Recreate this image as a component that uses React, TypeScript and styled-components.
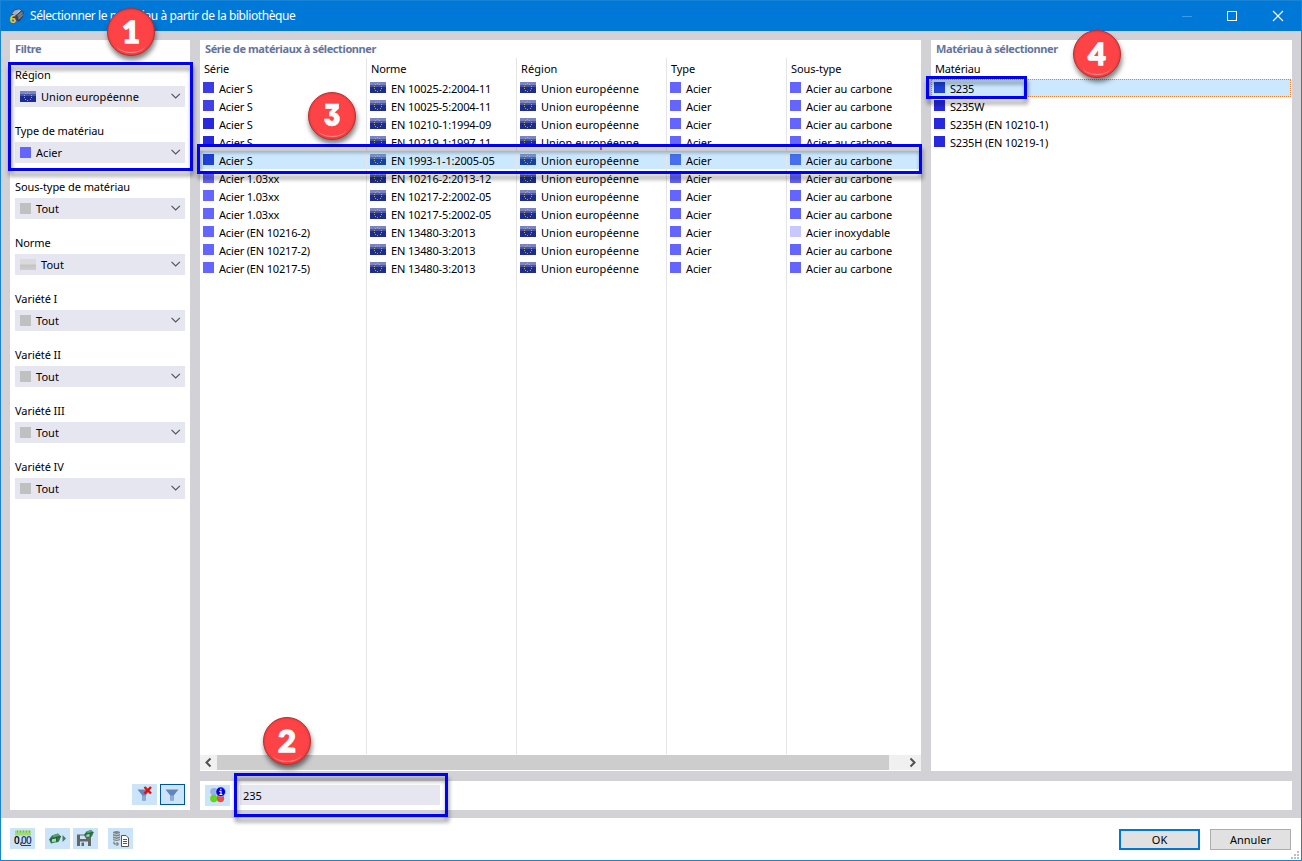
import React from 'react';
import styled, { createGlobalStyle, css } from 'styled-components';

const Global = createGlobalStyle`
  * { box-sizing: border-box; }
  html, body { margin: 0; padding: 0; background: #fff; }
  body { font: 11px/18px "Noto Sans", "Open Sans", sans-serif; color: #000; overflow: hidden; }
  svg { display: block; flex: none; overflow: visible; }
`;

const Win = styled.div`
  position: relative;
  width: 1302px; height: 861px;
  display: flex; flex-direction: column;
  border: 1px solid #1883d7;
  background: #fff;
`;
const TitleBar = styled.header`
  height: 30px; flex: none; display: flex; align-items: center;
  background: #0078d7; color: #fff; padding-left: 8px;
`;
const Title = styled.span`
  margin-left: 5px; flex: 1; font-size: 12px; letter-spacing: -0.41px;
`;
const Controls = styled.div`
  display: flex; width: 138px; height: 100%;
`;
const Control = styled.div`
  width: 46px; display: flex; align-items: center; justify-content: center; padding-bottom: 1px;
`;
const Body = styled.main`
  height: 787px; flex: none; display: grid; gap: 10px;
  grid-template-columns: 180px 721px 361px;
  grid-template-rows: 731px 29px;
  padding: 9px 9px 8px; background: #d2d1d6;
`;
const Panel = styled.section`
  background: #fff; min-width: 0; display: flex; flex-direction: column;
`;
const FilterPanel = styled(Panel)`grid-row: span 2;`;
const SearchPanel = styled.div`
  grid-column: 2 / 4; background: #fff; display: flex; align-items: flex-start; gap: 10px; padding: 4px 5px;
`;
const PanelTitle = styled.h2`
  margin: 0; height: 18px; flex: none; padding-left: 5px; font-size: 11px; line-height: 18px; font-weight: 700;
  letter-spacing: -0.4px; color: #64749c;
`;
const Field = styled.div`
  height: 56px; padding: 8px 5px 0;
`;
const Label = styled.div`height: 20px; line-height: 17px; letter-spacing: -0.07px;`;
const Select = styled.div`
  height: 21px; display: flex; align-items: center; padding: 0 4px 0 5px; gap: 5px; background: #e6e6f1; line-height: 20px;
  & > svg:last-child { position: relative; top: -1px; }
`;
const SelectText = styled.span`flex: 1; letter-spacing: 0.06px;`;
const FilterActions = styled.div`
  margin-top: auto; display: flex; justify-content: flex-end; gap: 3px; padding: 0 5px 5px;
`;
const ToolButton = styled.div<{ $active?: boolean }>`
  width: 25px; height: 21px; display: flex; align-items: center; justify-content: center; background: #cce4f7;
  ${p => p.$active && css`border: 1px solid #005499;`}
`;
const Table = styled.div`flex: 1; display: flex; padding-bottom: 1px;`;
const Column = styled.div<{ $w?: number; $line?: boolean; $tight?: number }>`
  letter-spacing: ${p => p.$tight ?? 0}px;
  ${p => (p.$w ? css`width: ${p.$w}px; flex: none;` : css`flex: 1;`)}
  ${p => p.$line && css`border-right: 1px solid #e5e5e5;`}
`;
const ColHead = styled.div`height: 21px; line-height: 22px; padding-left: 4px;`;
const Cell = styled.div<{ $sel?: boolean; $focus?: boolean }>`
  height: 18px; display: flex; gap: 5px; padding: 3px 0 0 3px; line-height: 14px; white-space: nowrap;
  ${p => p.$sel && css`background: #cce8ff;`}
  ${p => p.$focus && css`outline: 1px dotted #f08030; outline-offset: -1px; margin-right: 1px;`}
`;
const Swatch = styled.i<{ $c: string }>`
  width: 11px; height: 11px; flex: none; background: ${p => p.$c};
`;
const GreyFlag = styled.i`
  width: 16px; height: 11px; flex: none; background: linear-gradient(#dadada 0 45%, #c4c4c4 55%, #cecece);
`;
const ScrollBar = styled.div`
  height: 16px; flex: none; display: flex; background: #f0f0f0; border-bottom: 1px solid #fff;
`;
const ScrollArrow = styled.div`width: 17px; height: 15px; display: flex; align-items: center; justify-content: center;`;
const Thumb = styled.div`width: 672px; height: 15px; background: #cdcdcd; margin-right: 15px;`;
const Input = styled.div`
  width: 200px; height: 20px; background: #e6e6f1; padding-left: 3px; line-height: 21px; letter-spacing: -0.1px;
`;
const Footer = styled.footer`
  flex: 1; display: flex; align-items: flex-start; padding: 10px 10px 0 9px;
`;
const Tools = styled.div`
  display: flex; flex: 1;
  & > :nth-child(2), & > :nth-child(4) { margin-left: 10px; }
  & > :nth-child(3) { margin-left: 3px; }
`;
const Button = styled.div<{ $primary?: boolean }>`
  width: 81px; height: 21px; margin-top: 1px; margin-left: 10px; background: #e1e1e1; display: flex; align-items: center; justify-content: center;
  border: ${p => (p.$primary ? '2px solid #0078d7' : '1px solid #adadad')};
`;
const Grip = styled.svg`position: absolute; right: 2px; bottom: 1px;`;
const Frame = styled.div<{ $x: number; $y: number; $w: number; $h: number }>`
  position: absolute; left: ${p => p.$x - 1}px; top: ${p => p.$y - 1}px; width: ${p => p.$w}px; height: ${p => p.$h}px;
  border: 3px solid #00f; filter: drop-shadow(1px 5px 2px rgba(0, 0, 0, 0.42));
`;
const Badge = styled.div<{ $x: number; $y: number; $flat?: boolean }>`
  position: absolute; left: ${p => p.$x - 25}px; top: ${p => p.$y - 25}px; width: 48px; height: 48px; border-radius: 50%;
  background: #fd4346; border: 1px solid #b5322f; box-shadow: 1px 4px 5px rgba(0, 0, 0, 0.5), inset 0 0 2px #c33;
  color: #fafafa; font: 900 31px/44px Lato, sans-serif; text-align: center; -webkit-text-stroke: 1.4px #fafafa;
  ${p => p.$flat && css`font-family: Inter, sans-serif; font-size: 30px; font-feature-settings: "cv09" 1; -webkit-text-stroke: 0.5px #fafafa;`}
  &::after {
    content: ''; position: absolute; left: 9px; right: 9px; bottom: 2px; height: 14px;
    border-bottom: 1.5px solid #ff8c8c; border-radius: 50%;
  }
`;
const Digit = styled.span<{ $flat?: boolean }>`
  display: inline-block; ${p => p.$flat && css`transform: scaleX(0.84);`}
`;

const Flag = ({ sel }: { sel?: boolean }) => (
  <svg width="16" height="11" shapeRendering="crispEdges">
    <rect width="16" height="11" fill={sel ? '#1642a8' : '#1c2c92'} />
    <rect width="16" height="3" fill="#fff" opacity=".42" />
    <rect y="3" width="16" height="2" fill="#fff" opacity=".2" />
    <path
      d="M7 1h1v1h-1zM9 2h1v1h-1zM5 2h1v1h-1zM4 4h1v1h-1zM11 4h1v1h-1zM4 6h1v1h-1zM11 6h1v1h-1zM5 8h1v1h-1zM7 9h1v1h-1zM10 8h1v1h-1z"
      fill="#c2b66c" opacity=".85"
    />
  </svg>
);
const Chevron = () => (
  <svg width="11" height="8" viewBox="0 0 11 8" fill="none" stroke="#50505a" strokeWidth="1.1"><path d="M1.500 1.800L5.700 6L9.900 1.800" /></svg>
);
const Funnel = ({ off }: { off?: boolean }) => (
  <svg width="20" height="17" viewBox="0 0 20 17">
    <path d="M2.500 3.500H15.500L10.700 9.500V14.500H7.300V9.500Z" fill="#6485bb" /><path d="M7.300 9.500H10.700V14.500H7.300Z" fill="#8eaadb" />
    {off && <path d="M9.500 1L16 7.500M16 1L9.500 7.500" stroke="#e00d0d" strokeWidth="2.400" />}
  </svg>
);
const InfoIcon = () => (
  <svg width="18" height="17" viewBox="0 0 18 17">
    <circle cx="5" cy="4.800" r="3.800" fill="#9aaee6" /><circle cx="4.800" cy="11.500" r="3.700" fill="#61d61c" /><circle cx="11.500" cy="11.500" r="3.700" fill="#e94f4f" />
    <circle cx="11.700" cy="4.800" r="4.800" fill="#0000e0" stroke="#cce4f7" strokeWidth=".5" />
    <path d="M11 2.200h1.600M10.400 4.400H12V7.500M10.400 7.500h3" stroke="#fff" strokeWidth="1.100" fill="none" />
  </svg>
);
const UnitsIcon = () => (
  <svg width="18" height="18" viewBox="0 0 18 18">
    <rect x="1" y=".5" width="16" height="5" fill="#9ddc77" />
    <path d="M3.500 .5v2M6.500 .5v2M9.500 .5v2M12.500 .5v2M15.500 .5v2" stroke="#6fb850" />
    <text x="0" y="14" fontSize="10" fontWeight="600" fontFamily="Open Sans">0,</text>
    <text x="7" y="14" fontSize="10" fontWeight="600" fontFamily="Open Sans" fill="#1c3478" letterSpacing="-.6">00</text>
    <path d="M7 15.500H17" stroke="#2438a0" />
  </svg>
);
const Gem = () => (
  <g>
    <path d="M0 6L3 2L9 0L12 3L10 8L2 10Z" fill="#2f7d4c" /><path d="M3 2L9 0L11 2L5 4Z" fill="#5f9f78" />
    <path d="M3 5.500L7 5V8L3 8.500Z" fill="#a9dcb6" /><path d="M7.500 4L8 9M1 6L7 4L12 3" stroke="#23533a" strokeWidth=".8" fill="none" />
  </g>
);
const ImportIcon = () => (
  <svg width="21" height="16" viewBox="0 0 21 16"><g transform="translate(2 2.500)"><Gem /></g><path d="M15.500 4V11L19 7.500Z" fill="#56706a" /></svg>
);
const SaveIcon = () => (
  <svg width="21" height="18" viewBox="0 0 21 18">
    <path d="M2 4.500H14L16 6.500V16H2Z" fill="#666" /><path d="M5 5.500H11V9H5Z M5 11.500H13V16H5Z" fill="#cce4f7" /><path d="M6.500 12.500H9V16H6.500Z" fill="#666" />
    <g transform="translate(9 0) scale(.8)"><Gem /></g>
  </svg>
);
const CopyIcon = () => (
  <svg width="18" height="18" viewBox="0 0 18 18" fill="none">
    <path d="M1 2Q4.500 0 8 2V10Q4.500 12 1 10Z" fill="#858585" /><path d="M1 3.500Q4.500 5.500 8 3.500M1 6Q4.500 8 8 6M1 8.500Q4.500 10.500 8 8.500" stroke="#cce4f7" strokeWidth=".8" />
    <path d="M2 11.500V14H6M4.500 12L6.500 14L4.500 16" stroke="#666" /><path d="M9.500 5.500H14L16.500 8V16.500H9.500Z" fill="#fff" stroke="#555" /><path d="M11 9.500H15M11 11.500H15M11 13.500H15" stroke="#555" />
  </svg>
);
const AppIcon = () => (
  <svg width="16" height="16" viewBox="0 0 16 16">
    <path d="M2.500 6L5 2L10 .5L15 4L14.500 8L10 14L5 11Z" fill="#3c4350" />
    <path d="M3 5.500L5.500 2.500L10 1.200L12 2.600L6 7.500Z" fill="#9fb0c6" />
    <path d="M8.500 7L13 3.500L14 5L9.500 10Z" fill="#76808c" /><path d="M7.500 6L11.500 2.500M9.500 11L14 6.500" stroke="#dbe4ee" strokeWidth=".7" />
    <text x=".5" y="14.500" fontSize="11" fontWeight="700" fontFamily="Open Sans" fill="#f5c32c">6</text>
  </svg>
);

const FILTERS = ['Sous-type de matériau', 'Norme', 'Variété I', 'Variété II', 'Variété III', 'Variété IV'];
const B = '#6464ff';
const ROWS: [string, string, string][] = [
  ['#3c3ce6', 'Acier S', 'EN 10025-2:2004-11'],
  ['#4141e6', 'Acier S', 'EN 10025-5:2004-11'],
  ['#2828dc', 'Acier S', 'EN 10210-1:1994-09'],
  ['#2828dc', 'Acier S', 'EN 10219-1:1997-11'],
  ['#1e41d8', 'Acier S', 'EN 1993-1-1:2005-05'],
  [B, 'Acier 1.03xx', 'EN 10216-2:2013-12'],
  [B, 'Acier 1.03xx', 'EN 10217-2:2002-05'],
  [B, 'Acier 1.03xx', 'EN 10217-5:2002-05'],
  [B, 'Acier (EN 10216-2)', 'EN 13480-3:2013'],
  [B, 'Acier (EN 10217-2)', 'EN 13480-3:2013'],
  [B, 'Acier (EN 10217-5)', 'EN 13480-3:2013'],
];
const SEL = 4;
const MATERIALS = ['S235', 'S235W', 'S235H (EN 10210-1)', 'S235H (EN 10219-1)'];

export default function App() {
  const blue = (i: number) => (i === SEL ? '#466ef0' : B);
  return (
    <Win>
      <Global />
      <TitleBar>
        <AppIcon />
        <Title>Sélectionner le matériau à partir de la bibliothèque</Title>
        <Controls>
          <Control><svg width="10" height="10"><path d="M1 5.500H11" stroke="#3f9be6" /></svg></Control>
          <Control><svg width="10" height="10"><rect x=".5" y=".5" width="9" height="9" fill="none" stroke="#fff" /></svg></Control>
          <Control><svg width="10" height="10"><path d="M0 0L10 10M10 0L0 10" stroke="#fff" strokeWidth="1.1" /></svg></Control>
        </Controls>
      </TitleBar>
      <Body>
        <FilterPanel>
          <PanelTitle>Filtre</PanelTitle>
          <Field><Label>Région</Label><Select><Flag /><SelectText>Union européenne</SelectText><Chevron /></Select></Field>
          <Field><Label>Type de matériau</Label><Select><Swatch $c={B} /><SelectText>Acier</SelectText><Chevron /></Select></Field>
          {FILTERS.map(t => (
            <Field key={t}><Label>{t}</Label><Select>{t === 'Norme' ? <GreyFlag /> : <Swatch $c="#c0c0c0" />}<SelectText>Tout</SelectText><Chevron /></Select></Field>
          ))}
          <FilterActions>
            <ToolButton><Funnel off /></ToolButton>
            <ToolButton $active><Funnel /></ToolButton>
          </FilterActions>
        </FilterPanel>
        <Panel>
          <PanelTitle>Série de matériaux à sélectionner</PanelTitle>
          <Table>
            <Column $w={167} $line $tight={-0.17}><ColHead>Série</ColHead>{ROWS.map((r, i) => <Cell key={i} $sel={i === SEL}><Swatch $c={r[0]} />{r[1]}</Cell>)}</Column>
            <Column $w={150} $line $tight={-0.15}><ColHead>Norme</ColHead>{ROWS.map((r, i) => <Cell key={i} $sel={i === SEL}><Flag sel={i === SEL} />{r[2]}</Cell>)}</Column>
            <Column $w={150} $line $tight={0.06}><ColHead>Région</ColHead>{ROWS.map((_, i) => <Cell key={i} $sel={i === SEL}><Flag sel={i === SEL} />Union européenne</Cell>)}</Column>
            <Column $w={120} $line $tight={-0.1}><ColHead>Type</ColHead>{ROWS.map((_, i) => <Cell key={i} $sel={i === SEL}><Swatch $c={blue(i)} />Acier</Cell>)}</Column>
            <Column $tight={-0.05}><ColHead>Sous-type</ColHead>{ROWS.map((_, i) => <Cell key={i} $sel={i === SEL}><Swatch $c={i === 8 ? '#c8c8ff' : blue(i)} />{i === 8 ? 'Acier inoxydable' : 'Acier au carbone'}</Cell>)}</Column>
          </Table>
          <ScrollBar>
            <ScrollArrow><svg width="7" height="9" fill="none" stroke="#505050" strokeWidth="2"><path d="M5.500 .5L1.500 4.500L5.500 8.500" /></svg></ScrollArrow>
            <Thumb />
            <ScrollArrow><svg width="7" height="9" fill="none" stroke="#505050" strokeWidth="2"><path d="M1.500 .5L5.500 4.500L1.500 8.500" /></svg></ScrollArrow>
          </ScrollBar>
        </Panel>
        <Panel>
          <PanelTitle>Matériau à sélectionner</PanelTitle>
          <Table>
            <Column $tight={-0.17}><ColHead>Matériau</ColHead>{MATERIALS.map((m, i) => <Cell key={m} $sel={i === 0} $focus={i === 0}><Swatch $c={i ? '#2828dc' : '#1e41d8'} />{m}</Cell>)}</Column>
          </Table>
        </Panel>
        <SearchPanel>
          <ToolButton><InfoIcon /></ToolButton>
          <Input>235</Input>
        </SearchPanel>
      </Body>
      <Footer>
        <Tools>
          <ToolButton><UnitsIcon /></ToolButton><ToolButton><ImportIcon /></ToolButton><ToolButton><SaveIcon /></ToolButton><ToolButton><CopyIcon /></ToolButton>
        </Tools>
        <Button $primary>OK</Button>
        <Button>Annuler</Button>
      </Footer>
      <Grip width="8" height="8" fill="#bfbfbf"><path d="M6 0h2v2h-2zM3 3h2v2h-2zM6 3h2v2h-2zM0 6h2v2h-2zM3 6h2v2h-2zM6 6h2v2h-2z" /></Grip>
      <Frame $x={8} $y={62} $w={185} $h={109} />
      <Frame $x={197} $y={144} $w={725} $h={30} />
      <Frame $x={926} $y={76} $w={101} $h={23} />
      <Frame $x={234} $y={773} $w={214} $h={44} />
      <Badge $x={131} $y={32}><Digit>1</Digit></Badge>
      <Badge $x={287} $y={741}><Digit>2</Digit></Badge>
      <Badge $x={332} $y={116} $flat><Digit $flat>3</Digit></Badge>
      <Badge $x={1097} $y={54}><Digit>4</Digit></Badge>
    </Win>
  );
}
